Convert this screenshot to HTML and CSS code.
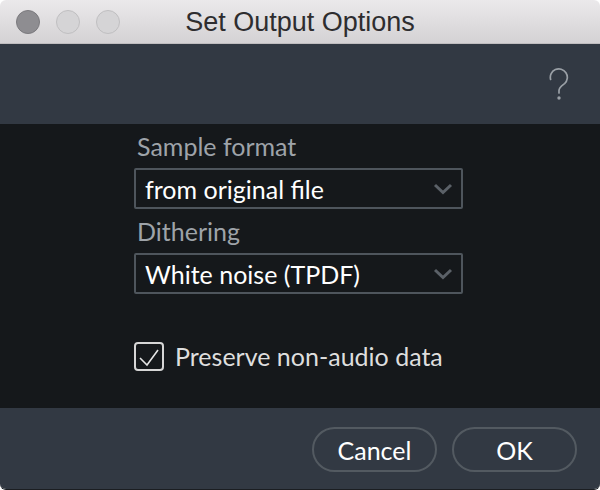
FILE: index.html
```html
<!DOCTYPE html>
<html>
<head>
<meta charset="utf-8">
<link rel="stylesheet" href="styles.css">
</head>
<body>
<div class="window">
  <div class="titlebar">
    <div class="lights">
      <span class="light light-close"></span>
      <span class="light"></span>
      <span class="light"></span>
    </div>
    <div class="title">Set Output Options</div>
  </div>
  <div class="header">
    <svg class="help" width="20" height="36" viewBox="0 0 20 36">
      <path d="M1.6 13.5 A8.5 8.5 0 1 1 15.6 17.6 C12.5 20 10 21.5 10 24.5 V27" fill="none" stroke="#9aa0a6" stroke-width="1.7" stroke-linecap="round"/>
      <circle cx="10" cy="32" r="1.7" fill="#9aa0a6"/>
    </svg>
  </div>
  <div class="content">
    <div class="field">
      <div class="label">Sample format</div>
      <div class="select">
        <span class="select-text">from original file</span>
        <svg class="chevron" width="20" height="12" viewBox="0 0 20 12"><polyline points="2,2 10,9.5 18,2" fill="none" stroke="#5b6168" stroke-width="3"/></svg>
      </div>
    </div>
    <div class="field">
      <div class="label">Dithering</div>
      <div class="select">
        <span class="select-text">White noise (TPDF)</span>
        <svg class="chevron" width="20" height="12" viewBox="0 0 20 12"><polyline points="2,2 10,9.5 18,2" fill="none" stroke="#5b6168" stroke-width="3"/></svg>
      </div>
    </div>
    <div class="check-row">
      <span class="checkbox">
        <svg width="26" height="24" viewBox="0 0 26 24"><polyline points="4,14 11,21 22,6" fill="none" stroke="#e4e4e4" stroke-width="1.6"/></svg>
      </span>
      <span class="check-label">Preserve non-audio data</span>
    </div>
  </div>
  <div class="footer">
    <button class="btn">Cancel</button>
    <button class="btn">OK</button>
  </div>
</div>
</body>
</html>
```
FILE: styles.css
```css
html, body {
  margin: 0;
  padding: 0;
  background: #ffffff;
}
.window {
  width: 600px;
  height: 489px;
  display: flex;
  flex-direction: column;
  border-radius: 6px;
  overflow: hidden;
  border-bottom: 1px solid #1b1e22;
  font-family: Lato, "Noto Sans", sans-serif;
}
.titlebar {
  height: 43px;
  flex: none;
  background: linear-gradient(#ebe9eb, #d4d2d4);
  border-bottom: 1px solid #bfbdbf;
  display: flex;
  align-items: center;
  position: relative;
}
.lights {
  display: flex;
  gap: 16px;
  padding-left: 16px;
  margin-top: 1px;
}
.light {
  width: 22px;
  height: 22px;
  border-radius: 50%;
  background: #d5d4d6;
  border: 1px solid #c0bfc1;
}
.light-close {
  background: #8e8d91;
  border-color: #7b7a7e;
}
.title {
  position: absolute;
  left: 0;
  right: 0;
  top: 0;
  line-height: 44px;
  text-align: center;
  font-family: "Liberation Sans", Arial, sans-serif;
  font-size: 27px;
  color: #2e2d2f;
  pointer-events: none;
}
.header {
  height: 80px;
  flex: none;
  background: #323943;
  display: flex;
  justify-content: flex-end;
  align-items: flex-start;
  padding-right: 31px;
}
.help {
  margin-top: 22px;
}
.content {
  flex: 1;
  background: #15181b;
  padding: 7px 0 0 134px;
}
.field {
  width: 329px;
}
.field + .field {
  margin-top: 1px;
}
.label {
  font-size: 25px;
  line-height: 30px;
  color: #9ea3a9;
  padding-left: 3px;
  margin-bottom: 7px;
}
.select {
  box-sizing: border-box;
  height: 41px;
  border: 2px solid #4e555c;
  border-radius: 2px;
  display: flex;
  align-items: center;
  justify-content: space-between;
  padding: 0 8px 0 9px;
  margin-bottom: 7px;
}
.select-text {
  font-size: 25px;
  color: #ffffff;
}
.chevron {
  display: block;
}
.check-row {
  display: flex;
  align-items: center;
  gap: 11px;
  margin-top: 47px;
}
.checkbox {
  box-sizing: border-box;
  width: 30px;
  height: 29px;
  border: 2px solid #d6d6d6;
  border-radius: 4px;
  display: flex;
  align-items: center;
  justify-content: center;
}
.checkbox svg {
  display: block;
}
.check-label {
  font-size: 25px;
  color: #dedede;
}
.footer {
  height: 81px;
  flex: none;
  background: #323943;
  display: flex;
  justify-content: flex-end;
  align-items: flex-start;
  gap: 15px;
  padding: 19px 23px 0 0;
  box-sizing: border-box;
}
.btn {
  width: 125px;
  height: 45px;
  border-radius: 23px;
  border: 2px solid #535a61;
  background: transparent;
  color: #ffffff;
  font-family: Lato, "Noto Sans", sans-serif;
  font-size: 25px;
  padding: 0;
}
```
